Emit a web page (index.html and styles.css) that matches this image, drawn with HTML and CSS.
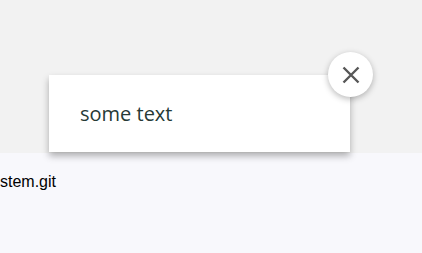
FILE: index.html
```html
<!DOCTYPE html>
<html>
<head>
<meta charset="utf-8">
<link rel="stylesheet" href="styles.css">
</head>
<body>
<div class="top">
  <div class="card">
    <span class="card-text">some text</span>
    <button class="close" aria-label="close">
      <svg width="18" height="18" viewBox="0 0 18 18"><path d="M1.5 1.5 L16.5 16.5 M16.5 1.5 L1.5 16.5" stroke="#575757" stroke-width="2.4" fill="none"/></svg>
    </button>
  </div>
</div>
<div class="bottom">
  <div class="repo">stem.git</div>
</div>
</body>
</html>
```
FILE: styles.css
```css
html, body {
  margin: 0;
  padding: 0;
  height: 100%;
  background: #f8f8fc;
}
.top {
  background: #f2f2f2;
  height: 153px;
  box-sizing: border-box;
  padding: 75px 0 0 49px;
}
.card {
  position: relative;
  width: 301px;
  height: 77px;
  background: #ffffff;
  box-shadow: 0 4px 7px rgba(0, 0, 0, 0.3);
  display: flex;
  align-items: center;
  padding-left: 31px;
  box-sizing: border-box;
  z-index: 1;
}
.card-text {
  font-family: "Open Sans", sans-serif;
  font-size: 20px;
  color: #263a36;
}
.close {
  position: absolute;
  top: -23px;
  right: -23px;
  width: 45px;
  height: 45px;
  border-radius: 50%;
  border: none;
  background: #ffffff;
  box-shadow: 0 2px 6px rgba(0, 0, 0, 0.28);
  display: flex;
  align-items: center;
  justify-content: center;
  padding: 0;
}
.bottom {
  padding-top: 20px;
}
.repo {
  font-family: "Liberation Sans", Arial, sans-serif;
  font-size: 16px;
  color: #000;
}
```
